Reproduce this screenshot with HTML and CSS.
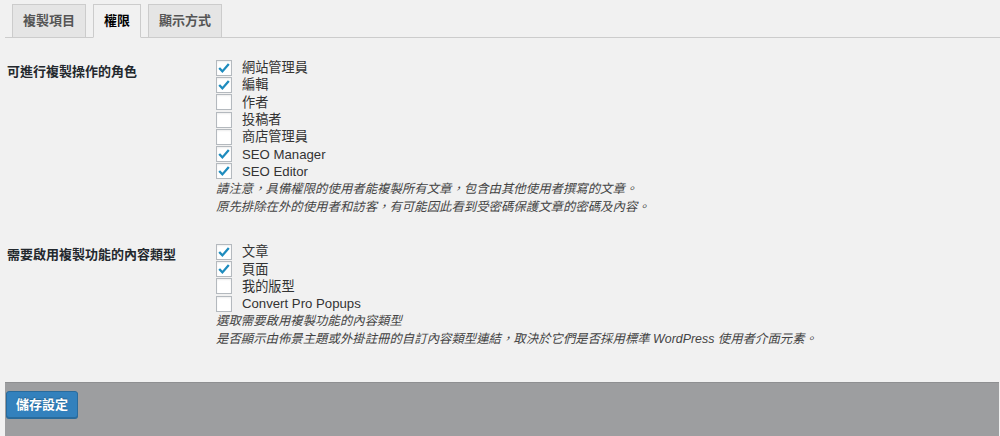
FILE: index.html
```html
<!DOCTYPE html>
<html lang="zh-Hant">
<head>
<meta charset="utf-8">
<title>設定</title>
<link rel="stylesheet" href="styles.css">
</head>
<body>
<div class="page">
  <nav class="tabs">
    <a class="tab">複製項目</a>
    <a class="tab active">權限</a>
    <a class="tab">顯示方式</a>
  </nav>

  <section class="row row-first">
    <div class="row-label">可進行複製操作的角色</div>
    <div class="row-field">
      <label class="opt"><span class="box checked"><svg viewBox="0 0 14 14"><path d="M2.2 7 L5.4 10.4 L11.8 3"/></svg></span>網站管理員</label>
      <label class="opt"><span class="box checked"><svg viewBox="0 0 14 14"><path d="M2.2 7 L5.4 10.4 L11.8 3"/></svg></span>編輯</label>
      <label class="opt"><span class="box"></span>作者</label>
      <label class="opt"><span class="box"></span>投稿者</label>
      <label class="opt"><span class="box"></span>商店管理員</label>
      <label class="opt"><span class="box checked"><svg viewBox="0 0 14 14"><path d="M2.2 7 L5.4 10.4 L11.8 3"/></svg></span>SEO Manager</label>
      <label class="opt"><span class="box checked"><svg viewBox="0 0 14 14"><path d="M2.2 7 L5.4 10.4 L11.8 3"/></svg></span>SEO Editor</label>
      <p class="desc">請注意，具備權限的使用者能複製所有文章，包含由其他使用者撰寫的文章。<br>原先排除在外的使用者和訪客，有可能因此看到受密碼保護文章的密碼及內容。</p>
    </div>
  </section>

  <section class="row row-second">
    <div class="row-label">需要啟用複製功能的內容類型</div>
    <div class="row-field">
      <label class="opt"><span class="box checked"><svg viewBox="0 0 14 14"><path d="M2.2 7 L5.4 10.4 L11.8 3"/></svg></span>文章</label>
      <label class="opt"><span class="box checked"><svg viewBox="0 0 14 14"><path d="M2.2 7 L5.4 10.4 L11.8 3"/></svg></span>頁面</label>
      <label class="opt"><span class="box"></span>我的版型</label>
      <label class="opt"><span class="box"></span>Convert Pro Popups</label>
      <p class="desc">選取需要啟用複製功能的內容類型<br>是否顯示由佈景主題或外掛註冊的自訂內容類型連結，取決於它們是否採用標準 WordPress 使用者介面元素。</p>
    </div>
  </section>

  <div class="spacer"></div>

  <footer class="submit-bar">
    <button class="btn-primary" type="button">儲存設定</button>
  </footer>
</div>
</body>
</html>
```

FILE: styles.css
```css
html, body {
  margin: 0;
  padding: 0;
  background: #f1f1f1;
}

body {
  font-family: "Liberation Sans", "Noto Sans CJK TC", sans-serif;
  font-size: 13px;
  color: #444;
}

.page {
  height: 436px;
  display: flex;
  flex-direction: column;
  padding-left: 5px;
  box-sizing: border-box;
}

.tabs {
  display: flex;
  padding-top: 4px;
  border-bottom: 1px solid #ccc;
  height: 33px;
  align-items: flex-start;
}

.tab {
  display: block;
  margin-left: 7px;
  padding: 5px 10px;
  line-height: 22px;
  font-size: 13px;
  font-weight: 700;
  color: #555;
  background: #e5e5e5;
  border: 1px solid #ccc;
  text-decoration: none;
}

.tab.active {
  color: #000;
  background: #f1f1f1;
  border-bottom-color: #f1f1f1;
}

.row {
  display: flex;
}

.row-first {
  margin-top: 21px;
}

.row-second {
  margin-top: 27px;
}

.row-label {
  width: 209px;
  padding-left: 2px;
  flex: none;
  font-weight: 700;
  font-size: 13px;
  color: #23282d;
  line-height: 20px;
  padding-top: 3px;
}

.row-second .row-label {
  padding-top: 2px;
}

.row-field {
  display: flex;
  flex-direction: column;
  align-items: flex-start;
}

.opt {
  display: flex;
  align-items: center;
  height: 17.3px;
  line-height: 17px;
  font-size: 13.2px;
  color: #333;
}

.box {
  width: 14px;
  height: 14px;
  border: 1px solid #b4b9be;
  background: #fff;
  box-shadow: inset 0 1px 2px rgba(0, 0, 0, 0.07);
  margin-right: 10px;
  display: flex;
  align-items: center;
  justify-content: center;
}

.box svg {
  width: 14px;
  height: 14px;
  display: block;
}

.box svg path {
  fill: none;
  stroke: #1e8cbe;
  stroke-width: 2.3;
  stroke-linecap: butt;
  stroke-linejoin: miter;
}

.desc {
  margin: 0;
  font-size: 12.4px;
  font-style: italic;
  line-height: 18px;
  color: #444;
}

.spacer {
  flex: 1;
}

.submit-bar {
  height: 54px;
  margin-right: 1px;
  background: #9d9ea0;
  border-top: 1px solid #8e8f91;
  padding: 8px 0 0 1px;
  box-sizing: border-box;
}

.btn-primary {
  font-family: "Liberation Sans", "Noto Sans CJK TC", sans-serif;
  font-size: 13px;
  font-weight: 700;
  line-height: 24px;
  height: 27px;
  padding: 0 9px;
  color: #fff;
  background: #3381bd;
  border: 1px solid #296b9c;
  border-radius: 3px;
  box-shadow: 0 1px 0 #2a6a99;
  text-shadow: 0 -1px 1px #236493;
  cursor: pointer;
}
```
